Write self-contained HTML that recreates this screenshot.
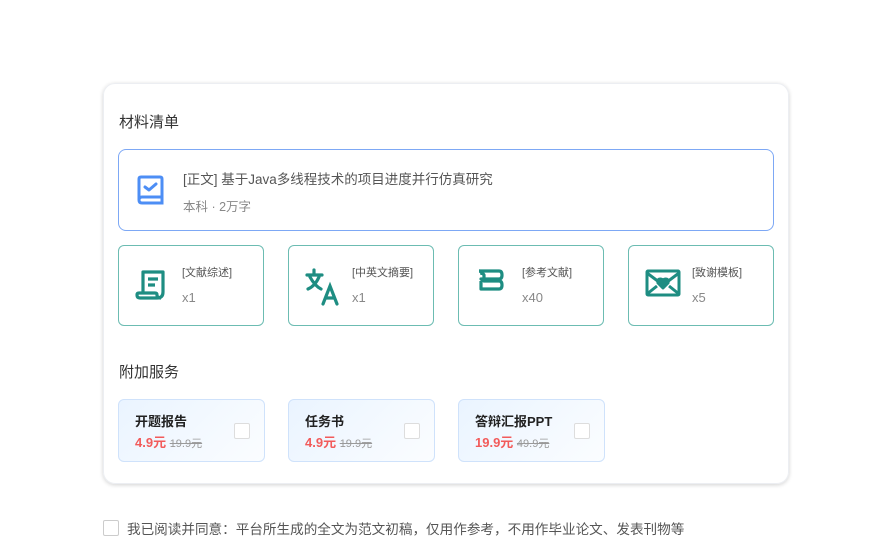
<!DOCTYPE html><html><head><meta charset="utf-8"><style>
body{margin:0;width:887px;height:545px;background:#fff;font-family:"Liberation Sans","Noto Sans CJK SC",sans-serif;position:relative;overflow:hidden}
.card{position:absolute;left:103px;top:83px;width:686px;height:401px;border-radius:12px;box-shadow:0 1px 4px rgba(0,0,0,.18);border:1px solid #eceef2;box-sizing:border-box}
.abs{position:absolute}
.h{font-size:15px;color:#333}
.main{left:118px;top:149px;width:656px;height:82px;border:1px solid #7da8f5;border-radius:8px;box-sizing:border-box}
.sm{top:245px;width:146px;height:81px;border:1px solid #6cbcb2;border-radius:6px;box-sizing:border-box}
.sm .t{position:absolute;left:63px;top:18px;font-size:11px;color:#555}
.sm .n{position:absolute;left:63px;top:44px;font-size:13px;color:#888}
.sm svg{position:absolute;left:16px;top:22px}
.sv{top:399px;width:147px;height:63px;border:1px solid #cfe2fb;border-radius:6px;box-sizing:border-box;background:linear-gradient(135deg,#eaf4ff,#fbfdff)}
.sv .t{position:absolute;left:16px;top:11px;font-size:13px;font-weight:bold;color:#222}
.sv .p{position:absolute;left:16px;top:32px;font-size:13px;font-weight:bold;color:#f25b5b}
.sv .p s{font-weight:normal;color:#999;font-size:11px}
.sv .c{position:absolute;left:115px;top:23px;width:14px;height:14px;border:1px solid #ddd;border-radius:2px;background:#fff}
</style></head><body>
<div class="card"></div>
<div class="abs h" style="left:119px;top:111px">材料清单</div>
<div class="abs main">
<svg class="abs" style="left:17px;top:24px" width="30" height="34" viewBox="0 0 30 34" fill="none" stroke="#4d8ef5" stroke-width="3"><path d="M3 26V5q0-2 2-2h19q2 0 2 2v24H6q-3 0-3-3 0-3 3-3h20"/><path d="M9 13l4 3 7-6" stroke-linecap="round" stroke-linejoin="round"/></svg>
<div class="abs" style="left:64px;top:18px;font-size:13.5px;color:#555">[正文] 基于Java多线程技术的项目进度并行仿真研究</div>
<div class="abs" style="left:64px;top:46px;font-size:12.5px;color:#888">本科 · 2万字</div>
</div>
<div class="abs sm" style="left:118px"><svg width="32" height="34" viewBox="0 0 32 34" fill="none" stroke="#1e8d82" stroke-width="3.2" stroke-linejoin="round"><path d="M8 26V4h20v20q0 6-6 6H5q-3 0-3-3 0-2 2-2h16q2 0 2 2 0 3 4 3"/><path d="M13 11h10M13 17h7"/></svg><div class="t">[文献综述]</div><div class="n">x1</div></div>
<div class="abs sm" style="left:288px"><svg width="36" height="38" viewBox="0 0 36 38" fill="none" stroke="#1e8d82" stroke-width="3.2" stroke-linecap="round"><path d="M9 2v4M2 7h15M5 9q5 9 11 12M14 9q-4 9-11 12M18 36l7-18 7 18M21 30h8"/></svg><div class="t">[中英文摘要]</div><div class="n">x1</div></div>
<div class="abs sm" style="left:458px"><svg width="32" height="34" viewBox="0 0 32 34" fill="none" stroke="#1e8d82" stroke-width="3.2" stroke-linejoin="round"><path d="M4 3h20q3 0 3 4 0 4-3 4H6l3 2h15q3 0 3 4 0 4-3 4H6v-8M6 3l3 4v4M6 13v8"/><path d="M4 3q3 0 3 4"/></svg><div class="t">[参考文献]</div><div class="n">x40</div></div>
<div class="abs sm" style="left:628px"><svg width="36" height="30" viewBox="0 0 36 30" fill="none" stroke="#1e8d82" stroke-width="3" stroke-linejoin="round"><rect x="2" y="3" width="32" height="24" rx="1"/><path d="M2 5l12 9M34 5l-12 9M2 26l10-8M34 26l-10-8"/><path d="M18 20l-5-5q-1-4 2.5-4 2 0 2.5 2 .5-2 2.5-2 3.5 0 2.5 4z" fill="#1e8d82"/></svg><div class="t">[致谢模板]</div><div class="n">x5</div></div>
<div class="abs h" style="left:119px;top:361px">附加服务</div>
<div class="abs sv" style="left:118px"><div class="t">开题报告</div><div class="p">4.9元 <s>19.9元</s></div><div class="c"></div></div>
<div class="abs sv" style="left:288px"><div class="t">任务书</div><div class="p">4.9元 <s>19.9元</s></div><div class="c"></div></div>
<div class="abs sv" style="left:458px"><div class="t">答辩汇报PPT</div><div class="p">19.9元 <s>49.9元</s></div><div class="c"></div></div>
<div class="abs" style="left:103px;top:520px;width:14px;height:14px;border:1px solid #ccc;border-radius:2px"></div>
<div class="abs" style="left:127px;top:518px;font-size:13.6px;color:#555;white-space:nowrap">我已阅读并同意：平台所生成的全文为范文初稿，仅用作参考，不用作毕业论文、发表刊物等</div>
</body></html>
